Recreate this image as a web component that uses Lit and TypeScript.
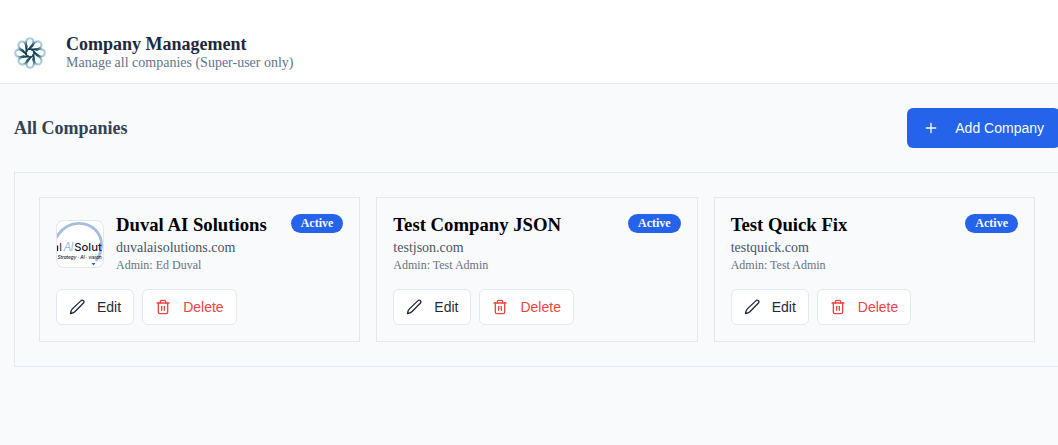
import { LitElement, html, css, svg, nothing } from "lit";
import { customElement, property } from "lit/decorators.js";

interface Company {
  name: string;
  domain: string;
  admin: string;
  logo?: boolean;
}

const companies: Company[] = [
  { name: "Duval AI Solutions", domain: "duvalaisolutions.com", admin: "Ed Duval", logo: true },
  { name: "Test Company JSON", domain: "testjson.com", admin: "Test Admin" },
  { name: "Test Quick Fix", domain: "testquick.com", admin: "Test Admin" },
];

const plusIcon = svg`<path d="M5 12h14"/><path d="M12 5v14"/>`;
const penIcon = svg`<path d="M21.700 6a2.500 2.500 0 0 0-4-3.200L5 14.800C3.500 16.500 2.700 18.600 2.300 21.700C5 21.400 7.300 20.500 8.800 19Z"/>`;
const trashIcon = svg`<path d="M3 6h18"/><path d="M19 6v14c0 1-1 2-2 2H7c-1 0-2-1-2-2V6"/><path d="M8 6V4c0-1 1-2 2-2h4c1 0 2 1 2 2v2"/><path d="M10 11v6"/><path d="M14 11v6"/>`;

const icon = (body: unknown) => html`<svg class="icon" viewBox="0 0 24 24" fill="none"
  stroke="currentColor" stroke-width="2" stroke-linecap="round" stroke-linejoin="round">${body}</svg>`;

@customElement("company-card")
export class CompanyCard extends LitElement {
  @property({ attribute: false }) company!: Company;

  static styles = css`
    :host { display: block; border: 1px solid #e5e7eb; padding: 16px; box-sizing: border-box; min-width: 0; height: 145px; }
    .top { display: flex; justify-content: space-between; align-items: flex-start; height: 60px; margin-bottom: 15px; }
    .identity { display: flex; align-items: center; gap: 12px; }
    .thumb { display: block; width: 46px; height: 46px; border: 1px solid #e5e7eb; border-radius: 8px; background: #fff; overflow: hidden; }
    .thumb svg { display: block; width: 46px; height: 46px; }
    .name { margin: 0; font-size: 18.72px; line-height: 21px; padding-bottom: 2px; font-weight: 700; color: #000; white-space: nowrap; }
    .domain { margin: 0; font-size: 14px; line-height: 20px; padding-top: 1px; color: #4b5563; }
    .admin { margin: 0; font-size: 12px; line-height: 15px; color: #6b7280; }
    .badge { background: #2563eb; color: #f8fafc; border-radius: 10px; font-size: 12px; font-weight: 700; line-height: 19px; height: 19px; padding: 0 10px; }
    .actions { display: flex; gap: 8px; }
    .btn { display: flex; align-items: center; gap: 12px; box-sizing: border-box; height: 36px; padding: 0 12px; border: 1px solid #e2e8f0; border-radius: 6px; background: #fff; color: #1e293b; font: 14px "Liberation Sans", Arial, sans-serif; }
    .danger { color: #ef4444; }
    .icon { width: 16px; height: 16px; flex: none; }
  `;

  render() {
    const c = this.company;
    return html`
      <div class="top">
        <div class="identity">
          ${c.logo
            ? html`<div class="thumb"><svg viewBox="0 0 46 46" font-family="Inter, sans-serif">
                <path d="M-1 17C6 5 14 2.300 22 2.300C35 2.300 45 12 44.500 25C44.200 31 42 36 39 40" fill="none" stroke="#a5bddd" stroke-width="2.800"/>
                <path d="M34.500 42h4l-2 2.500z" fill="#315f96"/>
                <path d="M0.600 24.500V30" stroke="#151b2c" stroke-width="1.200"/>
                <text x="2.200" y="30" font-size="11" fill="#151b2c">l</text>
                <text x="6.500" y="30" font-size="11.500" font-style="italic" textLength="10" fill="#a0b9da">AI</text>
                <text x="17.300" y="30" font-size="11" font-weight="500" textLength="27.500" lengthAdjust="spacingAndGlyphs" fill="#151b2c">Solut</text>
                <text x="0.500" y="37.500" font-size="4.800" font-weight="500" font-style="italic" textLength="44" lengthAdjust="spacingAndGlyphs" fill="#10141d">Strategy · AI · vision</text>
              </svg></div>`
            : nothing}
          <div>
            <h3 class="name">${c.name}</h3>
            <p class="domain">${c.domain}</p>
            <p class="admin">Admin: ${c.admin}</p>
          </div>
        </div>
        <div class="badge">Active</div>
      </div>
      <div class="actions">
        <button class="btn">${icon(penIcon)}<span>Edit</span></button>
        <button class="btn danger">${icon(trashIcon)}<span>Delete</span></button>
      </div>`;
  }
}

@customElement("app-root")
export class AppRoot extends LitElement {
  static styles = css`
    :host { display: block; height: 445px; overflow: hidden; background: #f8fafc; font-family: "Liberation Serif", "Times New Roman", serif; }
    .header { display: flex; align-items: center; gap: 20px; box-sizing: border-box; height: 84px; padding: 22px 14px 0; background: #fff; border-bottom: 1px solid #e2e8f0; }
    .logo { width: 32px; height: 32px; }
    .titles { padding-top: 2px; }
    .title { margin: 0; font-size: 18px; line-height: 18px; font-weight: 700; color: #1e293b; }
    .subtitle { margin: 0; font-size: 14px; line-height: 18px; padding-top: 1px; color: #64748b; }
    .content { width: 1046px; padding: 24px 0 0 14px; }
    .toolbar { display: flex; align-items: center; justify-content: space-between; height: 40px; margin-bottom: 24px; }
    .heading { margin: 0; font-size: 18px; font-weight: 700; color: #334155; }
    .add { display: flex; align-items: center; gap: 16px; height: 40px; padding: 0 16px; border: 0; border-radius: 6px; background: #2563eb; color: #f8fafc; font: 14px "Liberation Sans", Arial, sans-serif; }
    .icon { width: 16px; height: 16px; flex: none; }
    .panel { display: grid; grid-template-columns: repeat(3, 1fr); gap: 16px; box-sizing: border-box; padding: 24px; border: 1px solid #e2e8f0; }
  `;

  render() {
    return html`
      <header class="header">
        <svg class="logo" viewBox="0 0 32 32" fill="none">
          <defs>
            <radialGradient id="petal" gradientUnits="userSpaceOnUse" cx="16" cy="16" r="16">
              <stop offset="0.35" stop-color="#123f52"/>
              <stop offset="0.6" stop-color="#386a7e"/>
              <stop offset="0.8" stop-color="#9cc4d6"/>
              <stop offset="1" stop-color="#b4d5e3"/>
            </radialGradient>
          </defs>
          ${[0, 45, 90, 135, 180, 225, 270, 315].map(
            (a) => svg`<path transform="rotate(${a} 16 16)" stroke="url(#petal)" stroke-width="2.100"
              d="M12.600 14.800C13 12 11.200 8.500 12 5C12.600 2.300 14.200 1.200 16 1.200C18.300 1.200 19.700 3 19.600 5.500C19.500 7.200 18.900 8.500 17.800 9.800"/>`
          )}
          <circle cx="16" cy="16" r="4" stroke="#123f52" stroke-width="1.500"/>
        </svg>
        <div class="titles">
          <h1 class="title">Company Management</h1>
          <p class="subtitle">Manage all companies (Super-user only)</p>
        </div>
      </header>
      <main class="content">
        <div class="toolbar">
          <h2 class="heading">All Companies</h2>
          <button class="add">${icon(plusIcon)}<span>Add Company</span></button>
        </div>
        <section class="panel">
          ${companies.map((c) => html`<company-card .company=${c}></company-card>`)}
        </section>
      </main>`;
  }
}
